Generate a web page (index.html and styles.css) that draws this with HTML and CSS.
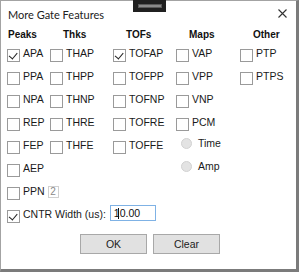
FILE: index.html
```html
<!DOCTYPE html>
<html lang="en">
<head>
  <meta charset="UTF-8">
  <title>More Gate Features</title>
  <link rel="stylesheet" href="styles.css">
</head>
<body>

  <div class="window">
    <div class="grip"><span></span></div>

    <div class="titlebar">
      <span class="title">More Gate Features</span>
      <svg class="close" width="9" height="9" viewBox="0 0 9 9">
        <path d="M0.5 0.5 L8.5 8.5 M8.5 0.5 L0.5 8.5" stroke="#333" stroke-width="1.1" fill="none"/>
      </svg>
    </div>

    <div class="features">
      <div class="head first">Peaks</div>
      <div class="head">Thks</div>
      <div class="head">TOFs</div>
      <div class="head">Maps</div>
      <div class="head">Other</div>

      <!-- row 1 -->
      <div class="item"><span class="box checked"></span><span class="lbl">APA</span></div>
      <div class="item"><span class="box"></span><span class="lbl">THAP</span></div>
      <div class="item"><span class="box checked"></span><span class="lbl">TOFAP</span></div>
      <div class="item"><span class="box"></span><span class="lbl">VAP</span></div>
      <div class="item"><span class="box"></span><span class="lbl">PTP</span></div>

      <!-- row 2 -->
      <div class="item"><span class="box"></span><span class="lbl">PPA</span></div>
      <div class="item"><span class="box"></span><span class="lbl">THPP</span></div>
      <div class="item"><span class="box"></span><span class="lbl">TOFPP</span></div>
      <div class="item"><span class="box"></span><span class="lbl">VPP</span></div>
      <div class="item"><span class="box"></span><span class="lbl">PTPS</span></div>

      <!-- row 3 -->
      <div class="item"><span class="box"></span><span class="lbl">NPA</span></div>
      <div class="item"><span class="box"></span><span class="lbl">THNP</span></div>
      <div class="item"><span class="box"></span><span class="lbl">TOFNP</span></div>
      <div class="item"><span class="box"></span><span class="lbl">VNP</span></div>
      <div></div>

      <!-- row 4 -->
      <div class="item"><span class="box"></span><span class="lbl">REP</span></div>
      <div class="item"><span class="box"></span><span class="lbl">THRE</span></div>
      <div class="item"><span class="box"></span><span class="lbl">TOFRE</span></div>
      <div class="item"><span class="box"></span><span class="lbl">PCM</span></div>
      <div></div>

      <!-- row 5 -->
      <div class="item"><span class="box"></span><span class="lbl">FEP</span></div>
      <div class="item"><span class="box"></span><span class="lbl">THFE</span></div>
      <div class="item"><span class="box"></span><span class="lbl">TOFFE</span></div>
      <div class="item radio"><span class="dot"></span><span class="lbl">Time</span></div>
      <div></div>

      <!-- row 6 -->
      <div class="item"><span class="box"></span><span class="lbl">AEP</span></div>
      <div></div>
      <div></div>
      <div class="item radio"><span class="dot"></span><span class="lbl">Amp</span></div>
      <div></div>

      <!-- row 7 -->
      <div class="item wide"><span class="box"></span><span class="lbl">PPN</span><span class="num">2</span></div>

      <!-- row 8 -->
      <div class="item wide"><span class="box checked"></span><span class="lbl">CNTR Width (us):</span>
        <span class="field">1<i class="caret"></i>0.00</span>
      </div>
    </div>

    <div class="buttons">
      <button>OK</button>
      <button>Clear</button>
    </div>
  </div>

</body>
</html>
```

FILE: styles.css
```css
body {
  margin: 0;
  background: #fff;
  font-family: "Liberation Sans", Arial, sans-serif;
  color: #1a1a1a;
}
.window {
  position: relative;
  width: 299px;
  height: 272px;
  box-sizing: border-box;
  background: #fff;
  border-top: 1px solid #a3a3a3;
  border-left: 1px solid #a3a3a3;
  border-right: 3px solid #7b7b7b;
  border-bottom: 3px solid #7b7b7b;
}
.grip {
  position: absolute;
  left: 132px;
  top: -1px;
  width: 33px;
  height: 12px;
  background: #202020;
}
.grip span {
  display: block;
  margin: 4px auto 0;
  width: 22px;
  height: 2px;
  border: 1px solid #5a5a5a;
  background: #8a8a8a;
}
.titlebar {
  display: flex;
  justify-content: space-between;
  align-items: center;
  height: 27px;
  padding: 0 9px 0 7px;
}
.title {
  font-family: Lato, "Liberation Sans", sans-serif;
  font-size: 11px;
  color: #222;
}
.close {
  margin-top: -2px;
}
.features {
  display: grid;
  grid-template-columns: 43px 63px 63px 64px 1fr;
  grid-template-rows: 21px;
  grid-auto-rows: 23px;
  margin-left: 6px;
}
.head {
  font-size: 10px;
  font-weight: bold;
  color: #111;
  padding: 1px 0 0 13px;
  line-height: 12px;
}
.head.first {
  padding-left: 1px;
}
.item {
  display: flex;
  align-items: flex-start;
}
.item.wide {
  grid-column: 1 / -1;
}
.box {
  position: relative;
  width: 13px;
  height: 13px;
  box-sizing: border-box;
  border: 1px solid #9a9a9a;
  background: #fff;
  flex: none;
}
.box.checked::after {
  content: "";
  position: absolute;
  left: 2px;
  top: 1px;
  width: 4px;
  height: 7px;
  border-right: 1.5px solid #222;
  border-bottom: 1.5px solid #222;
  transform: rotate(40deg);
  transform-origin: 60% 60%;
}
.lbl {
  font-size: 10.5px;
  line-height: 12px;
  margin: -2px 0 0 3px;
  white-space: nowrap;
}
.radio {
  margin-top: -3px;
}
.dot {
  width: 11px;
  height: 11px;
  box-sizing: border-box;
  border-radius: 50%;
  background: #e3e3e3;
  border: 1px solid #d2d2d2;
  margin-left: 5px;
  flex: none;
}
.radio .lbl {
  margin: -1px 0 0 6px;
}
.num {
  width: 11px;
  height: 12px;
  box-sizing: border-box;
  border: 1px solid #d0d0d0;
  font-size: 10px;
  line-height: 10px;
  color: #888;
  text-align: center;
  margin: -1px 0 0 3px;
}
.field {
  width: 46px;
  height: 16px;
  box-sizing: border-box;
  border: 1px solid #7fb2e5;
  font-size: 10.5px;
  line-height: 14px;
  padding-left: 3px;
  margin: -5px 0 0 4px;
  color: #111;
}
.caret {
  display: inline-block;
  width: 1px;
  height: 11px;
  background: #111;
  vertical-align: -2px;
  margin-left: -2px;
  margin-right: 1px;
}
.buttons {
  display: flex;
  justify-content: center;
  gap: 6px;
  margin-top: 1px;
  padding-left: 3px;
}
button {
  width: 67px;
  height: 20px;
  background: #e1e1e1;
  border: 1px solid #a8a8a8;
  font-family: "Liberation Sans", Arial, sans-serif;
  font-size: 10.5px;
  color: #222;
  padding: 0;
}
```
